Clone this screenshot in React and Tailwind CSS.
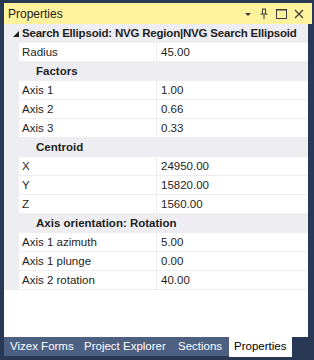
import React from 'react';

const groups = [
  { title: 'Factors', rows: [['Axis 1', '1.00'], ['Axis 2', '0.66'], ['Axis 3', '0.33']] },
  { title: 'Centroid', rows: [['X', '24950.00'], ['Y', '15820.00'], ['Z', '1560.00']] },
  {
    title: 'Axis orientation: Rotation',
    rows: [['Axis 1 azimuth', '5.00'], ['Axis 1 plunge', '0.00'], ['Axis 2 rotation', '40.00']],
  },
];

// tab widths taken from the reference
const tabs = [
  ['Vizex Forms', 'w-[74px]'],
  ['Project Explorer', 'w-[94px]'],
  ['Sections', 'w-[57px]'],
];

const PropRow = ({ name, value }) => (
  <div className="flex h-[19px] bg-[#eeeef2]">
    <div className="w-[15px] shrink-0" />
    <div className="flex flex-1 bg-white border-b border-[#eeeef2]">
      <div className="w-[138px] shrink-0 pl-[3px] leading-[18px] border-r border-[#eeeef2] whitespace-nowrap">{name}</div>
      <div className="flex-1 pl-[4px] leading-[18px]">{value}</div>
    </div>
  </div>
);

const Category = ({ children, arrow }) => (
  <div className="flex items-center h-[19px] bg-[#eeeef2] font-bold whitespace-nowrap">
    <div className="w-[18px] shrink-0 flex justify-end pr-[3px]">
      {arrow && (
        <svg width="6" height="6" viewBox="0 0 6 6">
          <polygon points="6,0 6,6 0,6" fill="#1e1e1e" />
        </svg>
      )}
    </div>
    {children}
  </div>
);

export default function App() {
  return (
    <div className="w-[314px] h-[360px] bg-[#293955] flex flex-col pt-[3px] pl-[4px] pr-[2px] pb-[4px] font-['Segoe_UI','Liberation_Sans',sans-serif] text-[11.5px] text-[#1e1e1e] overflow-hidden">
      <div className="h-[21px] shrink-0 bg-[#fff29d] flex items-center pl-[4px] pr-[8px] text-[12px]">
        <span className="flex-1">Properties</span>
        <div className="flex items-center gap-[7px]">
          <svg width="8" height="8" viewBox="0 0 8 8">
            <polygon points="1,3 7,3 4,6" fill="#3c3c3c" />
          </svg>
          <svg width="10" height="11" viewBox="0 0 10 11">
            <path d="M3 1h4M3.5 1v5M6.5 1v5M1.5 6h7M5 6v5" stroke="#3c3c3c" strokeWidth="1" fill="none" />
          </svg>
          <svg width="11" height="11" viewBox="0 0 11 11">
            <rect x="0.5" y="1.5" width="10" height="9" stroke="#3c3c3c" strokeWidth="1" fill="none" />
            <path d="M0.5 2h10" stroke="#3c3c3c" strokeWidth="1" />
          </svg>
          <svg width="10" height="10" viewBox="0 0 10 10">
            <path d="M1 1l8 8M9 1l-8 8" stroke="#3c3c3c" strokeWidth="1.2" fill="none" />
          </svg>
        </div>
      </div>
      <div className="flex-1 bg-white mr-[4px] flex flex-col">
        <Category arrow>
          <span className="tracking-[-0.2px]">Search Ellipsoid: NVG Region|NVG Search Ellipsoid</span>
        </Category>
        <PropRow name="Radius" value="45.00" />
        {groups.map((g) => (
          <React.Fragment key={g.title}>
            <Category>
              <span className="pl-[14px]">{g.title}</span>
            </Category>
            {g.rows.map(([n, v]) => (
              <PropRow key={n} name={n} value={v} />
            ))}
          </React.Fragment>
        ))}
      </div>
      <div className="h-[19px] shrink-0 flex whitespace-nowrap">
        {tabs.map(([t, w]) => (
          <div key={t} className={`${w} bg-[#4d6082] text-white pl-[6px] leading-[19px]`}>
            {t}
          </div>
        ))}
        <div className="w-[63px] bg-white text-black pl-[5px] leading-[19px] h-[20px]">Properties</div>
      </div>
    </div>
  );
}
